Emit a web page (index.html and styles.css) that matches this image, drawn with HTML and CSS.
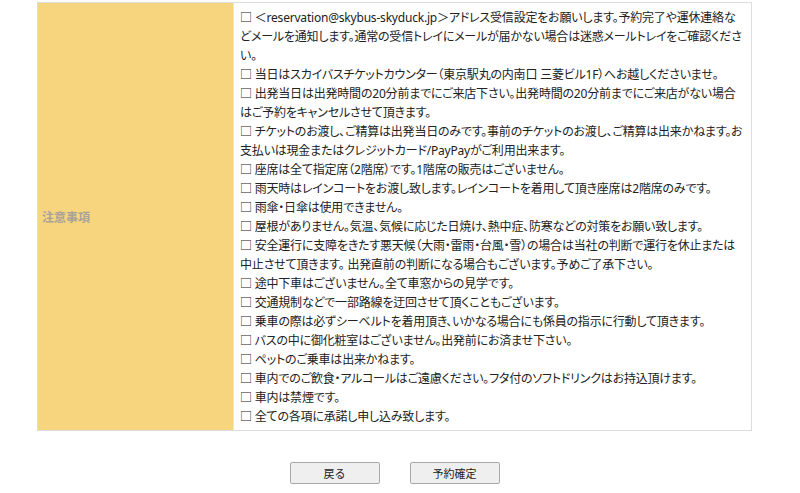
FILE: index.html
```html
<!DOCTYPE html>
<html>
<head>
	<meta charset="utf-8">
	<title>注意事項</title>
	<link rel="stylesheet" href="styles.css">
</head>
<body>
	<div class="content">
		<table class="notes">
			<tr>
				<th class="label">注意事項</th>
				<td class="items">
					<p>□ ＜reservation@skybus-skyduck.jp＞アドレス受信設定をお願いします。予約完了や運休連絡などメールを通知します。通常の受信トレイにメールが届かない場合は迷惑メールトレイをご確認ください。</p>
					<p>□ 当日はスカイバスチケットカウンター（東京駅丸の内南口 三菱ビル1F）へお越しくださいませ。</p>
					<p>□ 出発当日は出発時間の20分前までにご来店下さい。出発時間の20分前までにご来店がない場合はご予約をキャンセルさせて頂きます。</p>
					<p>□ チケットのお渡し、ご精算は出発当日のみです。事前のチケットのお渡し、ご精算は出来かねます。お支払いは現金またはクレジットカード/PayPayがご利用出来ます。</p>
					<p>□ 座席は全て指定席（2階席）です。1階席の販売はございません。</p>
					<p>□ 雨天時はレインコートをお渡し致します。レインコートを着用して頂き座席は2階席のみです。</p>
					<p>□ 雨傘・日傘は使用できません。</p>
					<p>□ 屋根がありません。気温、気候に応じた日焼け、熱中症、防寒などの対策をお願い致します。</p>
					<p>□ 安全運行に支障をきたす悪天候（大雨・雷雨・台風・雪）の場合は当社の判断で運行を休止または中止させて頂きます。 出発直前の判断になる場合もございます。予めご了承下さい。</p>
					<p>□ 途中下車はございません。全て車窓からの見学です。</p>
					<p>□ 交通規制などで一部路線を迂回させて頂くこともございます。</p>
					<p>□ 乗車の際は必ずシーベルトを着用頂き、いかなる場合にも係員の指示に行動して頂きます。</p>
					<p>□ バスの中に御化粧室はございません。出発前にお済ませ下さい。</p>
					<p>□ ペットのご乗車は出来かねます。</p>
					<p>□ 車内でのご飲食・アルコールはご遠慮ください。フタ付のソフトドリンクはお持込頂けます。</p>
					<p>□ 車内は禁煙です。</p>
					<p>□ 全ての各項に承諾し申し込み致します。</p>
				</td>
			</tr>
		</table>

		<div class="buttons">
			<input type="button" class="btn" value="戻る">
			<input type="button" class="btn" value="予約確定">
		</div>
	</div>
</body>
</html>
```

FILE: styles.css
```css
*{
	padding: 0;
	margin: 0;
}
body{
	font-family: "Noto Sans", "Noto Sans CJK JP", sans-serif;
	font-size: 12px;
	color: #222;
	background: #fff;
}
.content{
	width: 715px;
	margin: 2px 0 0 37px;
}
.notes{
	width: 715px;
	border-collapse: collapse;
	border: 1px solid #dcdcdc;
}
.label{
	width: 187px;
	padding: 0 4px;
	background: #f7d47e;
	color: #a8a29a;
	font-weight: bold;
	font-size: 12px;
	text-align: left;
	vertical-align: middle;
	border-right: 1px solid #e6e6e6;
}
.items{
	padding: 5px 6px 4px 6px;
	font-size: 12px;
	line-height: 19px;
	font-feature-settings: "palt";
	letter-spacing: -0.2px;
	vertical-align: top;
}
.buttons{
	display: flex;
	justify-content: center;
	gap: 30px;
	margin-top: 31px;
}
.btn{
	width: 90px;
	height: 22px;
	font-family: "Noto Sans CJK JP", sans-serif;
	font-size: 11px;
	color: #222;
	background: #efefef;
	border: 1px solid #a9a9a9;
	border-radius: 2px;
}
```
